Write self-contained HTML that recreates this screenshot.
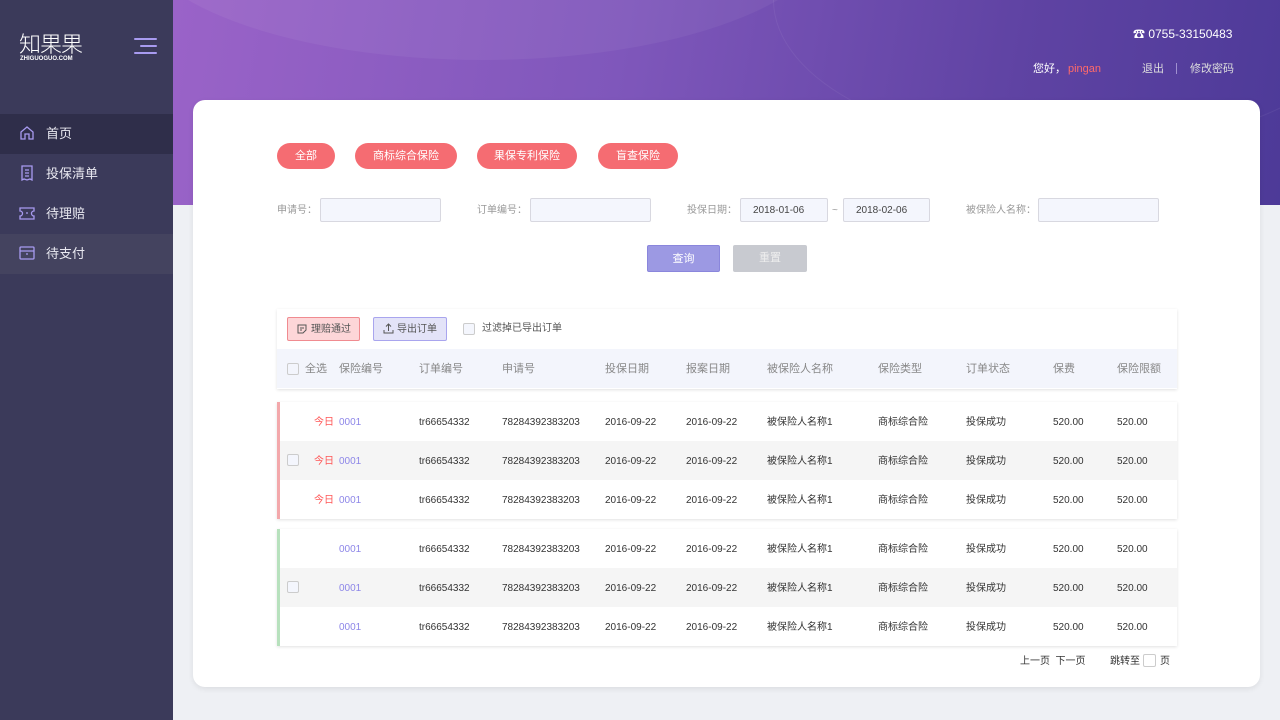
<!DOCTYPE html>
<html><head><meta charset="utf-8"><style>
*{margin:0;padding:0;box-sizing:border-box}
body{width:1280px;height:720px;overflow:hidden;background:#eef0f4;font-family:"Liberation Sans","Noto Sans CJK SC",sans-serif;position:relative;font-size:11px;color:#333}
.abs{position:absolute}
.side{left:0;top:0;width:173px;height:720px;background:#3b3a5a}
.nav{left:0;width:173px;height:40px;color:#e8e8f0;font-size:13px;line-height:40px;padding-left:46px}
.hdr{left:173px;top:0;width:1107px;height:205px;background:linear-gradient(100deg,#9a63c8 0%,#7f57bb 40%,#5f43a3 75%,#4d3a98 100%);overflow:hidden}
.card{left:193px;top:100px;width:1067px;height:587px;background:#fff;border-radius:12px;box-shadow:0 2px 6px rgba(0,0,0,.08)}
.pill{top:143px;height:26px;border-radius:13px;background:#f56c72;color:#fff;font-size:11px;line-height:26px;text-align:center}
.lbl{top:205px;font-size:10px;color:#999;line-height:12px}
.inp{top:198px;height:24px;border:1px solid #d8d8e0;border-radius:2px;background:#f4f6fd;font-size:10px;line-height:24px;padding-left:12px;color:#444}
.row{left:277px;width:900px;height:39px}
.c{position:absolute;top:1px;line-height:39px;font-size:10px;color:#333}
.h{font-size:11px;color:#888}
.cb{position:absolute;width:12px;height:12px;border:1px solid #ccc;border-radius:2px;background:#f4f6fd}
</style></head><body>
<div class="abs side"></div>
<div class="abs" style="left:19px;top:29px;color:#fff;font-size:22px;line-height:28px;letter-spacing:-1px;font-family:'Noto Sans CJK SC',sans-serif;font-weight:300">知果果</div>
<div class="abs" style="left:20px;top:56px;color:#fff;font-size:6px;line-height:7px;font-weight:bold">ZHIGUOGUO.COM</div>
<div class="abs" style="left:134px;top:38px;width:23px;height:2px;background:#a89bf0;border-radius:1px"></div>
<div class="abs" style="left:140px;top:45px;width:17px;height:2px;background:#a89bf0;border-radius:1px"></div>
<div class="abs" style="left:134px;top:52px;width:23px;height:2px;background:#a89bf0;border-radius:1px"></div>
<div class="abs nav" style="top:114px;background:#2f2e4a">首页</div>
<div class="abs nav" style="top:154px">投保清单</div>
<div class="abs nav" style="top:194px">待理赔</div>
<div class="abs nav" style="top:234px;background:#44435f">待支付</div>
<svg class="abs" style="left:19px;top:125px" width="16" height="16" viewBox="0 0 16 16" fill="none" stroke="#a89bf0" stroke-width="1.3"><path d="M2 7L8 2l6 5v7H10V9H6v5H2z"/></svg>
<svg class="abs" style="left:20px;top:165px" width="14" height="16" viewBox="0 0 14 16" fill="none" stroke="#a89bf0" stroke-width="1.3"><path d="M2 1h10v14l-2-1-3 1-3-1-2 1zM5 5h4M5 8h4M5 11h4"/></svg>
<svg class="abs" style="left:19px;top:207px" width="16" height="13" viewBox="0 0 16 13" fill="none" stroke="#a89bf0" stroke-width="1.3"><path d="M1 1h14v3a2 2 0 000 5v3H1V9a2 2 0 000-5z M7 6h2"/></svg>
<svg class="abs" style="left:19px;top:246px" width="16" height="14" viewBox="0 0 16 14" fill="none" stroke="#a89bf0" stroke-width="1.3"><rect x="1" y="1" width="14" height="12" rx="1"/><path d="M1 5h14M7 8h2"/></svg>

<div class="abs hdr">
<div class="abs" style="left:-40px;top:-200px;width:700px;height:260px;border-radius:50%;background:rgba(255,255,255,.05)"></div>
<div class="abs" style="left:600px;top:-150px;width:600px;height:300px;border-radius:50%;border:1px solid rgba(255,255,255,.06)"></div>
</div>
<div class="abs" style="left:1133px;top:27px;color:#fff;font-size:12px;line-height:14px">☎ 0755-33150483</div>
<div class="abs" style="left:1033px;top:63px;color:#fff;font-size:11px;line-height:13px">您好，</div>
<div class="abs" style="left:1068px;top:63px;color:#ff6a6a;font-size:11px;line-height:13px">pingan</div>
<div class="abs" style="left:1142px;top:63px;color:#ddd;font-size:11px;line-height:13px">退出</div>
<div class="abs" style="left:1176px;top:63px;width:1px;height:11px;background:#a090d0"></div>
<div class="abs" style="left:1190px;top:63px;color:#ddd;font-size:11px;line-height:13px">修改密码</div>

<div class="abs card"></div>
<div class="abs pill" style="left:277px;width:58px">全部</div>
<div class="abs pill" style="left:355px;width:102px">商标综合保险</div>
<div class="abs pill" style="left:477px;width:100px">果保专利保险</div>
<div class="abs pill" style="left:598px;width:80px">盲查保险</div>

<div class="abs lbl" style="left:277px">申请号：</div>
<div class="abs inp" style="left:320px;width:121px"></div>
<div class="abs lbl" style="left:477px">订单编号：</div>
<div class="abs inp" style="left:530px;width:121px"></div>
<div class="abs lbl" style="left:687px">投保日期：</div>
<div class="abs inp" style="left:740px;width:88px">2018-01-06</div>
<div class="abs lbl" style="left:832px">~</div>
<div class="abs inp" style="left:843px;width:87px">2018-02-06</div>
<div class="abs lbl" style="left:966px">被保险人名称：</div>
<div class="abs inp" style="left:1038px;width:121px"></div>

<div class="abs" style="left:647px;top:245px;width:73px;height:27px;background:#9c99e3;border:1px solid #8a86dc;border-radius:2px;color:#fff;text-align:center;line-height:27px">查询</div>
<div class="abs" style="left:733px;top:245px;width:74px;height:27px;background:#c8cad0;border-radius:2px;color:#eee;text-align:center;line-height:27px">重置</div>

<div class="abs" style="left:277px;top:309px;width:900px;height:80px;background:#fff;box-shadow:0 1px 3px rgba(0,0,0,.12)"></div>
<div class="abs" style="left:287px;top:317px;width:73px;height:24px;background:#fdd6d8;border:1px solid #f08b90;border-radius:2px;font-size:10px;line-height:23px;padding-left:23px;color:#555">理赔通过</div>
<svg class="abs" style="left:297px;top:324px" width="10" height="10" viewBox="0 0 10 10" fill="none" stroke="#555" stroke-width="1"><path d="M1 1h8v5l-3 3H1zM3 4h4M3 6h2"/></svg>
<div class="abs" style="left:373px;top:317px;width:74px;height:24px;background:#e3e3f8;border:1px solid #a9a5ee;border-radius:2px;font-size:10px;line-height:23px;padding-left:23px;color:#555">导出订单</div>
<svg class="abs" style="left:383px;top:323px" width="11" height="11" viewBox="0 0 11 11" fill="none" stroke="#555" stroke-width="1"><path d="M5.5 8V1M3 3.5l2.5-2.5 2.5 2.5M1 7v3h9V7"/></svg>
<div class="cb" style="left:463px;top:323px"></div>
<div class="abs" style="left:482px;top:323px;font-size:10px;line-height:12px;color:#555">过滤掉已导出订单</div>

<div class="abs row" style="top:349px;background:#f3f5fc">
<div class="cb" style="left:10px;top:14px;background:#f3f5fc"></div>
<div class="c h" style="left:28px">全选</div><div class="c h" style="left:62px">保险编号</div><div class="c h" style="left:142px">订单编号</div><div class="c h" style="left:225px">申请号</div><div class="c h" style="left:328px">投保日期</div><div class="c h" style="left:409px">报案日期</div><div class="c h" style="left:490px">被保险人名称</div><div class="c h" style="left:601px">保险类型</div><div class="c h" style="left:689px">订单状态</div><div class="c h" style="left:776px">保费</div><div class="c h" style="left:840px">保险限额</div>
</div>

<div class="abs" style="left:277px;top:402px;width:900px;height:117px;background:#fff;box-shadow:0 1px 3px rgba(0,0,0,.12);border-left:3px solid #f3a8ab"></div>
<div class="abs" style="left:277px;top:529px;width:900px;height:117px;background:#fff;box-shadow:0 1px 3px rgba(0,0,0,.12);border-left:3px solid #b7e1bd"></div>

<div id="rows"></div>
<script>
var tops=[402,441,480,529,568,607],h='';
tops.forEach(function(t,i){
var bg=(i%3==1)?'#f5f5f5':'transparent';
h+='<div class="abs row" style="top:'+t+'px;left:280px;width:897px;background:'+bg+'">';
if(i%3==1)h+='<div class="cb" style="left:7px;top:13px"></div>';
if(i<3)h+='<div class="c" style="left:34px;color:#f55">今日</div>';
h+='<div class="c" style="left:59px;color:#8d86e8">0001</div><div class="c" style="left:139px">tr66654332</div><div class="c" style="left:222px">78284392383203</div><div class="c" style="left:325px">2016-09-22</div><div class="c" style="left:406px">2016-09-22</div><div class="c" style="left:487px">被保险人名称1</div><div class="c" style="left:598px">商标综合险</div><div class="c" style="left:686px">投保成功</div><div class="c" style="left:773px">520.00</div><div class="c" style="left:837px">520.00</div></div>';
});
document.getElementById('rows').innerHTML=h;
</script>

<div class="abs" style="left:1020px;top:656px;font-size:10px;line-height:12px;color:#333">上一页&nbsp;&nbsp;下一页</div>
<div class="abs" style="left:1110px;top:656px;font-size:10px;line-height:12px;color:#333">跳转至</div>
<div class="abs" style="left:1143px;top:654px;width:13px;height:13px;border:1px solid #ccc;border-radius:2px"></div>
<div class="abs" style="left:1160px;top:656px;font-size:10px;line-height:12px;color:#333">页</div>
</body></html>
